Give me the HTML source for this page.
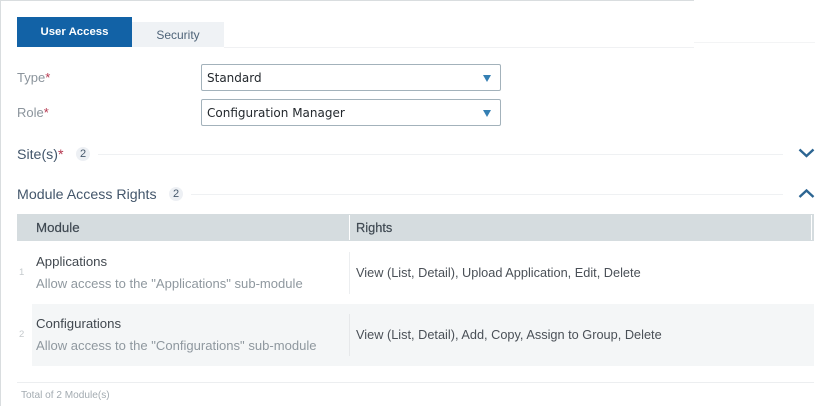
<!DOCTYPE html>
<html><head><meta charset="utf-8"><style>
html,body{margin:0;padding:0;background:#fff}
#p{position:relative;width:825px;height:416px;overflow:hidden;background:#fff;font-family:"Liberation Sans",sans-serif;font-size:13.2px;color:#4a5057}
#p div{position:absolute;white-space:nowrap}
.t{line-height:16px}
.sel{left:201px;width:298px;height:25px;border:1px solid #a3b2bb;border-radius:2px;background:#fff}
.sel span{position:absolute;left:5px;top:5px;font:12px/16px "DejaVu Sans",sans-serif;color:#23282d}
.sel i{position:absolute;left:281px;top:10px;width:0;height:0;border-left:4px solid transparent;border-right:4px solid transparent;border-top:7px solid #357fb3}
.badge{width:14px;height:14px;border-radius:7px;background:#edf0f4;font-size:11px;line-height:15px;text-align:center;color:#47596c}
.hl{height:1px;background:#eff1f3}
.lab{color:#8b949c;font-size:13px}
b{color:#b5374f;font-weight:400}
.sec{color:#43566b;font-size:14.2px}
.sub{color:#8f989f;font-size:13.05px}
.r{font-size:12.75px}
</style></head><body><div id="p">
<div style="left:0;top:0;width:694px;height:1px;background:#d9dddf"></div>
<div style="left:0;top:0;width:1px;height:406px;background:#d9dddf"></div>

<div style="left:17px;top:17px;width:115px;height:30px;background:#1262a6;color:#fff;font-weight:700;font-size:11.4px;line-height:30px;text-align:center">User Access</div>
<div style="left:132px;top:22px;width:92px;height:25px;background:#eff2f5;color:#4f6479;font-size:12px;line-height:26px;text-align:center">Security</div>
<div style="left:224px;top:47px;width:470px;height:1px;background:#f0f1f3"></div>
<div style="left:694px;top:42px;width:121px;height:1px;background:#f3f4f5"></div>

<div class="t lab" style="left:17px;top:70px">Type<b>*</b></div>
<div class="sel" style="top:64px"><span>Standard</span><i></i></div>
<div class="t lab" style="left:17px;top:105px">Role<b>*</b></div>
<div class="sel" style="top:99px"><span>Configuration Manager</span><i></i></div>

<div class="t sec" style="left:17px;top:147px">Site(s)<b>*</b></div>
<div class="badge" style="left:76px;top:147px">2</div>
<div class="hl" style="left:98px;top:154px;width:685px"></div>
<svg style="position:absolute;left:798px;top:147px" width="17" height="12" viewBox="0 0 17 12"><path d="M1.5 2.5 L8.5 9 L15.5 2.5" fill="none" stroke="#2c6592" stroke-width="2.4"/></svg>

<div class="t sec" style="left:17px;top:187px">Module Access Rights</div>
<div class="badge" style="left:169px;top:187px">2</div>
<div class="hl" style="left:191px;top:194px;width:592px"></div>
<svg style="position:absolute;left:798px;top:187px" width="17" height="12" viewBox="0 0 17 12"><path d="M1.5 10 L8.5 3.5 L15.5 10" fill="none" stroke="#2c6592" stroke-width="2.4"/></svg>

<div style="left:17px;top:214px;width:797px;height:27px;background:#d5dcdf"></div>
<div style="left:349px;top:215px;width:1px;height:25px;background:#fff"></div>
<div style="left:811px;top:215px;width:1px;height:25px;background:#fff"></div>
<div class="t" style="left:36px;top:220px;color:#3f4952;font-size:13.3px;-webkit-text-stroke:.2px #3f4952">Module</div>
<div class="t" style="left:356px;top:220px;color:#3f4952;font-size:12.8px;-webkit-text-stroke:.2px #3f4952">Rights</div>

<div class="t" style="left:19px;top:265px;font-size:9.5px;color:#c5cacd">1</div>
<div class="t" style="left:36px;top:254px;color:#41484f">Applications</div>
<div class="t sub" style="left:36px;top:276px">Allow access to the "Applications" sub-module</div>
<div style="left:349px;top:252px;width:1px;height:42px;background:#eceef0"></div>
<div class="t r" style="left:356px;top:265px">View (List, Detail), Upload Application, Edit, Delete</div>

<div style="left:32px;top:304px;width:782px;height:62px;background:#f4f6f7"></div>
<div class="t" style="left:19px;top:327px;font-size:9.5px;color:#c5cacd">2</div>
<div class="t" style="left:36px;top:316px;color:#41484f">Configurations</div>
<div class="t sub" style="left:36px;top:338px">Allow access to the "Configurations" sub-module</div>
<div style="left:349px;top:314px;width:1px;height:42px;background:#e6e8ea"></div>
<div class="t r" style="left:356px;top:327px">View (List, Detail), Add, Copy, Assign to Group, Delete</div>

<div style="left:17px;top:382px;width:797px;height:1px;background:#eceef0"></div>
<div class="t" style="left:21px;top:388px;font-size:10.1px;color:#a3abb1">Total of 2 Module(s)</div>
</div></body></html>
